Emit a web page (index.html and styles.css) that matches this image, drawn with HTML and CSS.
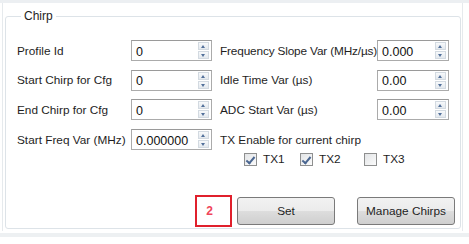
FILE: index.html
```html
<!DOCTYPE html>
<html>
<head>
<meta charset="utf-8">
<link rel="stylesheet" href="styles.css">
</head>
<body>
<div class="topband"></div>
<div class="frame">
  <fieldset class="group">
    <legend class="legend">Chirp</legend>
    <div class="grid">
      <div class="lbl">Profile Id</div>
      <div class="spin"><span class="val">0</span><span class="arrows"><span class="up"></span><span class="dn"></span></span></div>
      <div class="lbl tight">Frequency Slope Var (MHz/µs)</div>
      <div class="spin"><span class="val">0.000</span><span class="arrows"><span class="up"></span><span class="dn"></span></span></div>

      <div class="lbl">Start Chirp for Cfg</div>
      <div class="spin"><span class="val">0</span><span class="arrows"><span class="up"></span><span class="dn"></span></span></div>
      <div class="lbl">Idle Time Var (µs)</div>
      <div class="spin"><span class="val">0.00</span><span class="arrows"><span class="up"></span><span class="dn"></span></span></div>

      <div class="lbl">End Chirp for Cfg</div>
      <div class="spin"><span class="val">0</span><span class="arrows"><span class="up"></span><span class="dn"></span></span></div>
      <div class="lbl">ADC Start Var (µs)</div>
      <div class="spin"><span class="val">0.00</span><span class="arrows"><span class="up"></span><span class="dn"></span></span></div>

      <div class="lbl">Start Freq Var (MHz)</div>
      <div class="spin"><span class="val">0.000000</span><span class="arrows"><span class="up"></span><span class="dn"></span></span></div>
      <div class="lbl span2">TX Enable for current chirp</div>
    </div>
    <div class="checks">
      <div class="chk"><span class="box on"></span><span>TX1</span></div>
      <div class="chk"><span class="box on"></span><span>TX2</span></div>
      <div class="chk"><span class="box"></span><span>TX3</span></div>
    </div>
    <div class="buttons">
      <div class="marker">2</div>
      <div class="btn set">Set</div>
      <div class="btn manage">Manage Chirps</div>
    </div>
  </fieldset>
</div>
<div class="bottomband"></div>
</body>
</html>
```

FILE: styles.css
```css
html, body {
  margin: 0;
  padding: 0;
  background: #ffffff;
  width: 469px;
  height: 244px;
  overflow: hidden;
  font-family: "Liberation Sans", Arial, sans-serif;
  font-size: 11.8px;
  color: #1e1e1e;
}
.topband {
  height: 3px;
  background: #eceff2;
}
.frame {
  margin-left: 2px;
  width: 461px;
  border-left: 1px solid #e6eaed;
  border-right: 1px solid #e6eaed;
  padding: 6px 1px 1px 2px;
  box-sizing: border-box;
  height: 228px;
}
.group {
  margin: 0;
  padding: 0 0 0 11px;
  border: 1px solid #dde3e8;
  border-radius: 3px;
  height: 220px;
  box-sizing: border-box;
}
.legend {
  margin-left: 4px;
  padding: 0 3px;
  font-size: 12px;
  color: #1e1e1e;
}
.grid {
  margin-top: 17px;
  display: grid;
  grid-template-columns: 114px 81px 165px 72px;
  grid-auto-rows: 21px;
  column-gap: 0;
  row-gap: 8.7px;
}
.grid .lbl {
  display: flex;
  align-items: center;
  white-space: nowrap;
}
.grid .lbl:nth-child(4n+3) {
  padding-left: 8px;
}
.grid .tight {
  letter-spacing: -0.15px;
}
.span2 {
  grid-column: span 2;
}
.spin {
  display: flex;
  align-items: stretch;
  border: 1px solid #ababab;
  border-top-color: #9a9a9a;
  background: #fff;
  box-sizing: border-box;
  padding: 1px;
}
.val {
  flex: 1;
  display: flex;
  align-items: center;
  padding-left: 3px;
  padding-top: 2px;
  color: #111;
  font-size: 12.5px;
}
.arrows {
  width: 11px;
  display: flex;
  flex-direction: column;
  gap: 1px;
  margin-right: 1px;
}
.up, .dn {
  flex: 1;
  background: linear-gradient(#f7f9fb, #e4e9ee);
  border: 1px solid #d3dae1;
  position: relative;
}
.up::after, .dn::after {
  content: "";
  position: absolute;
  left: 2px;
  top: 2px;
  border-left: 2.5px solid transparent;
  border-right: 2.5px solid transparent;
}
.up::after {
  border-bottom: 3px solid #52709a;
}
.dn::after {
  border-top: 3px solid #52709a;
  top: 2px;
}
.checks {
  display: grid;
  grid-template-columns: 56px 64px auto;
  margin-left: 227px;
  margin-top: 2px;
  height: 14px;
}
.chk {
  display: flex;
  align-items: center;
  gap: 6px;
}
.box {
  width: 13px;
  height: 13px;
  box-sizing: border-box;
  border: 1px solid #8e8f8f;
  background: linear-gradient(135deg, #e2e4e6, #fbfbfb);
  position: relative;
}
.box.on::after {
  content: "";
  position: absolute;
  left: 3px;
  top: 1px;
  width: 3px;
  height: 7px;
  border-right: 2px solid #4a6690;
  border-bottom: 2px solid #4a6690;
  transform: rotate(40deg);
}
.buttons {
  display: flex;
  align-items: center;
  margin-left: 178px;
  margin-top: 29px;
}
.marker {
  width: 37px;
  height: 32px;
  box-sizing: border-box;
  border: 2px solid #e0202c;
  color: #f0455a;
  font-weight: bold;
  font-size: 12px;
  display: flex;
  align-items: center;
  justify-content: center;
  padding-right: 8px;
}
.btn {
  height: 28px;
  width: 98px;
  box-sizing: border-box;
  border: 1px solid #7a7a7a;
  border-radius: 3px;
  background: linear-gradient(#f2f2f2 0%, #ebebeb 50%, #dddddd 51%, #cfcfcf 100%);
  display: flex;
  align-items: center;
  justify-content: center;
  color: #1e1e1e;
}
.set {
  margin-left: 5px;
}
.manage {
  margin-left: 22px;
}
.bottomband {
  margin-top: 2px;
  height: 4px;
  background: #edf0f2;
}
```
